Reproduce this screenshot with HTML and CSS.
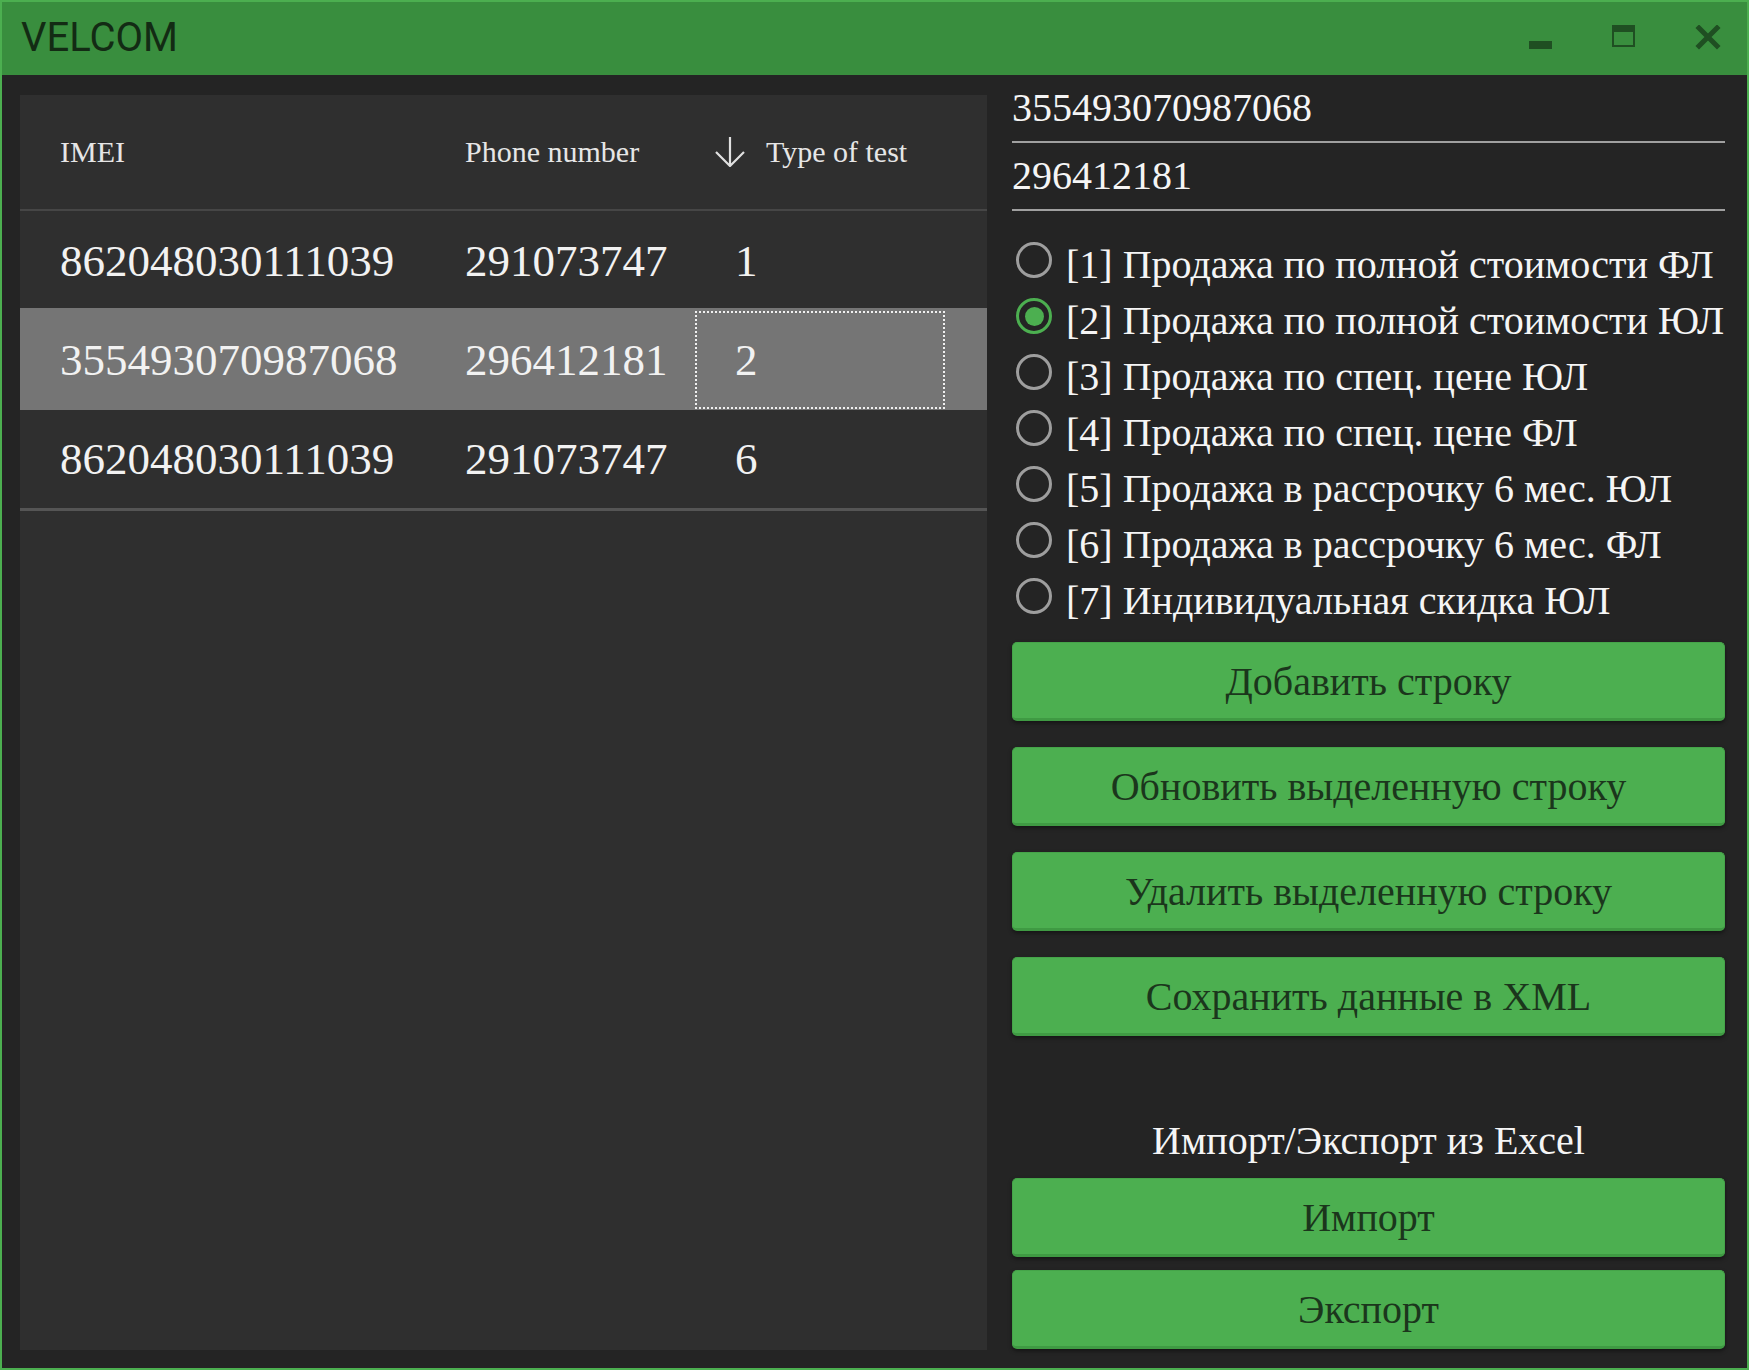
FILE: index.html
```html
<!DOCTYPE html>
<html lang="ru">
<head>
<meta charset="utf-8">
<title>VELCOM</title>
<link rel="stylesheet" href="styles.css">
</head>
<body>
<div class="window">
  <header class="titlebar">
    <span class="title">VELCOM</span>
    <div class="controls">
      <svg class="ctl" width="24" height="25" viewBox="0 0 24 25"><rect x="0" y="16" width="23" height="8"/></svg>
      <svg class="ctl" width="24" height="25" viewBox="0 0 24 25"><path fill-rule="evenodd" d="M0 0H23V22H0Z M2 7V20H21V7Z"/></svg>
      <svg class="ctl" width="26" height="25" viewBox="0 0 26 25"><path class="x" d="M4 3L22 21M22 3L4 21"/></svg>
    </div>
  </header>
  <main class="content">
    <section class="grid">
      <div class="row head">
        <div class="cell">IMEI</div>
        <div class="cell">Phone number</div>
        <div class="cell sortcell">
          <svg class="sort" width="30" height="30" viewBox="0 0 30 30"><path d="M15 0V28.5M1 15L15 29L29 15"/></svg>
          <span>Type of test</span>
        </div>
        <div class="cell"></div>
      </div>
      <div class="row">
        <div class="cell">862048030111039</div>
        <div class="cell">291073747</div>
        <div class="cell">1</div>
        <div class="cell"></div>
      </div>
      <div class="row selected">
        <div class="cell">355493070987068</div>
        <div class="cell">296412181</div>
        <div class="cell focus">2</div>
        <div class="cell"></div>
      </div>
      <div class="row last">
        <div class="cell">862048030111039</div>
        <div class="cell">291073747</div>
        <div class="cell">6</div>
        <div class="cell"></div>
      </div>
    </section>
    <aside class="side">
      <div class="field">355493070987068</div>
      <div class="field">296412181</div>
      <ul class="radios">
        <li class="radio"><span class="dot"></span><span>[1] Продажа по полной стоимости ФЛ</span></li>
        <li class="radio checked"><span class="dot"></span><span>[2] Продажа по полной стоимости ЮЛ</span></li>
        <li class="radio"><span class="dot"></span><span>[3] Продажа по спец. цене ЮЛ</span></li>
        <li class="radio"><span class="dot"></span><span>[4] Продажа по спец. цене ФЛ</span></li>
        <li class="radio"><span class="dot"></span><span>[5] Продажа в рассрочку 6 мес. ЮЛ</span></li>
        <li class="radio"><span class="dot"></span><span>[6] Продажа в рассрочку 6 мес. ФЛ</span></li>
        <li class="radio"><span class="dot"></span><span>[7] Индивидуальная скидка ЮЛ</span></li>
      </ul>
      <div class="actions">
        <button class="btn">Добавить строку</button>
        <button class="btn">Обновить выделенную строку</button>
        <button class="btn">Удалить выделенную строку</button>
        <button class="btn">Сохранить данные в XML</button>
      </div>
      <div class="excel-label">Импорт/Экспорт из Excel</div>
      <div class="excel">
        <button class="btn">Импорт</button>
        <button class="btn">Экспорт</button>
      </div>
    </aside>
  </main>
</div>
</body>
</html>
```
FILE: styles.css
```css
html, body {
  margin: 0;
  padding: 0;
  background: #242424;
}
body {
  width: 1749px;
  height: 1370px;
  overflow: hidden;
  font-family: "Liberation Serif", "Times New Roman", serif;
}
.window {
  box-sizing: border-box;
  width: 1749px;
  height: 1370px;
  border: 2px solid #4caf50;
  background: #242424;
  display: flex;
  flex-direction: column;
}
.titlebar {
  height: 73px;
  flex: none;
  background: #398e3e;
  display: flex;
  align-items: center;
  justify-content: space-between;
  padding-left: 19px;
}
.title {
  font-family: Roboto, "Liberation Sans", sans-serif;
  font-size: 40px;
  color: #132b14;
  margin-bottom: 2px;
}
.controls {
  align-self: flex-start;
  padding-top: 23px;
  padding-right: 26px;
  display: flex;
  gap: 59px;
}
.ctl {
  display: block;
  fill: #1f4f22;
}
.ctl .x {
  fill: none;
  stroke: #1f4f22;
  stroke-width: 5;
  stroke-linecap: square;
}
.content {
  flex: 1;
  display: flex;
  gap: 25px;
  padding: 0 22px 18px 18px;
  min-height: 0;
}
.grid {
  width: 967px;
  flex: none;
  margin-top: 20px;
  background: #2f2f2f;
  color: #f2f2f2;
}
.row {
  display: grid;
  grid-template-columns: 405px 270px 250px 42px;
  height: 99px;
  font-size: 45px;
}
.row .cell {
  box-sizing: border-box;
  display: flex;
  align-items: center;
  padding-left: 40px;
  white-space: nowrap;
}
.row.head {
  height: 114px;
  font-size: 30px;
  color: #e6e6e6;
  border-bottom: 2px solid #464646;
}
.sortcell {
  gap: 21px;
}
.row.head .sortcell {
  padding-left: 20px;
}
.sort {
  display: block;
  fill: none;
  stroke: #e0e0e0;
  stroke-width: 2.2;
}
.row.selected {
  background: #757575;
  box-shadow: 0 -2px 0 #757575, 0 1px 0 #757575;
  position: relative;
}
.row.selected .focus {
  border: 2px dotted #f0f0f0;
  padding-left: 38px;
  margin-top: 1px;
}
.row.last {
  border-bottom: 3px solid #555555;
}
.side {
  flex: 1;
  display: flex;
  flex-direction: column;
  color: #f5f5f5;
  font-size: 40px;
}
.field {
  line-height: 46px;
  padding: 10px 0;
  border-bottom: 2px solid #a0a0a0;
}
.radios {
  list-style: none;
  margin: 26px 0 0;
  padding: 0;
}
.radio {
  display: flex;
  align-items: flex-start;
  height: 56px;
  line-height: 56px;
  white-space: nowrap;
}
.dot {
  box-sizing: border-box;
  flex: none;
  width: 36px;
  height: 36px;
  margin: 5px 14px 0 4px;
  border: 3.5px solid #9e9e9e;
  border-radius: 50%;
  display: flex;
  align-items: center;
  justify-content: center;
}
.radio.checked .dot {
  border-color: #4caf50;
}
.radio.checked .dot::after {
  content: "";
  width: 19px;
  height: 19px;
  border-radius: 50%;
  background: #4caf50;
}
.actions {
  display: flex;
  flex-direction: column;
  gap: 26px;
  margin-top: 13px;
}
.btn {
  box-sizing: border-box;
  height: 79px;
  width: 100%;
  margin: 0;
  padding: 2px 0 0;
  background: #4caf50;
  border: 1px solid #45a449;
  border-bottom: 3px solid #3f9a43;
  border-radius: 5px;
  box-shadow: 0 2px 4px rgba(0, 0, 0, 0.45);
  font-family: "Liberation Serif", "Times New Roman", serif;
  font-size: 40px;
  color: #1b361c;
  text-align: center;
  cursor: pointer;
}
.excel-label {
  margin-top: 82px;
  line-height: 46px;
  text-align: center;
}
.excel {
  display: flex;
  flex-direction: column;
  gap: 13px;
  margin-top: 14px;
}
```
